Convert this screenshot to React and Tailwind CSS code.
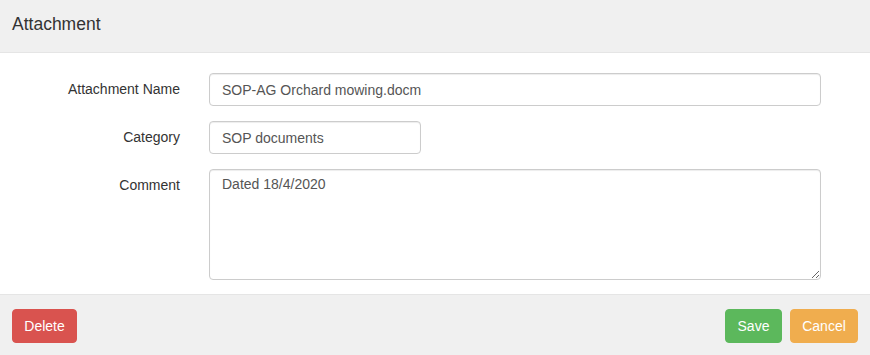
export default function App() {
  const font = { fontFamily: '"Liberation Sans", Arial, sans-serif' };
  return (
    <div className="w-[870px] h-[355px] bg-white flex flex-col" style={font}>
      <div className="h-[53px] bg-[#f0f0f0] border-b border-[#e5e5e5] flex items-center px-3 shrink-0">
        <h4 className="text-[17.5px] text-[#333] leading-none -mt-[2px]">Attachment</h4>
      </div>
      <div className="flex-1 bg-white pt-[20px] pr-[49px] flex flex-col gap-[15px]">
        <div className="flex items-center">
          <label className="w-[180px] text-right text-[14px] text-[#333] pr-0">Attachment Name</label>
          <input
            readOnly
            value="SOP-AG Orchard mowing.docm"
            className="ml-[29px] flex-1 h-[33px] border border-[#ccc] rounded-[4px] px-3 text-[14px] text-[#555] outline-none shadow-[inset_0_1px_1px_rgba(0,0,0,0.075)]"
            style={font}
          />
        </div>
        <div className="flex items-center">
          <label className="w-[180px] text-right text-[14px] text-[#333]">Category</label>
          <input
            readOnly
            value="SOP documents"
            className="ml-[29px] w-[212px] h-[33px] border border-[#ccc] rounded-[4px] px-3 text-[14px] text-[#555] outline-none shadow-[inset_0_1px_1px_rgba(0,0,0,0.075)]"
            style={font}
          />
        </div>
        <div className="flex items-start">
          <label className="w-[180px] text-right text-[14px] text-[#333] pt-[6px]">Comment</label>
          <textarea
            readOnly
            value="Dated 18/4/2020"
            className="ml-[29px] flex-1 h-[111px] border border-[#ccc] rounded-[4px] px-3 pt-[4px] pb-[6px] text-[14px] leading-[20px] text-[#555] outline-none resize-y shadow-[inset_0_1px_1px_rgba(0,0,0,0.075)]"
            style={font}
          />
        </div>
      </div>
      <div className="h-[61px] bg-[#f0f0f0] border-t border-[#e5e5e5] flex items-start pt-[14px] px-3 shrink-0">
        <button className="h-[34px] w-[65px] rounded-[4px] bg-[#d9534f] border border-[#d9534f] text-white text-[14px]" style={font}>
          Delete
        </button>
        <div className="ml-auto flex gap-2">
          <button className="h-[34px] w-[57px] rounded-[4px] bg-[#5cb85c] border border-[#5cb85c] text-white text-[14px]" style={font}>
            Save
          </button>
          <button className="h-[34px] w-[68px] rounded-[4px] bg-[#f0ad4e] border border-[#f0ad4e] text-white text-[14px]" style={font}>
            Cancel
          </button>
        </div>
      </div>
    </div>
  );
}
